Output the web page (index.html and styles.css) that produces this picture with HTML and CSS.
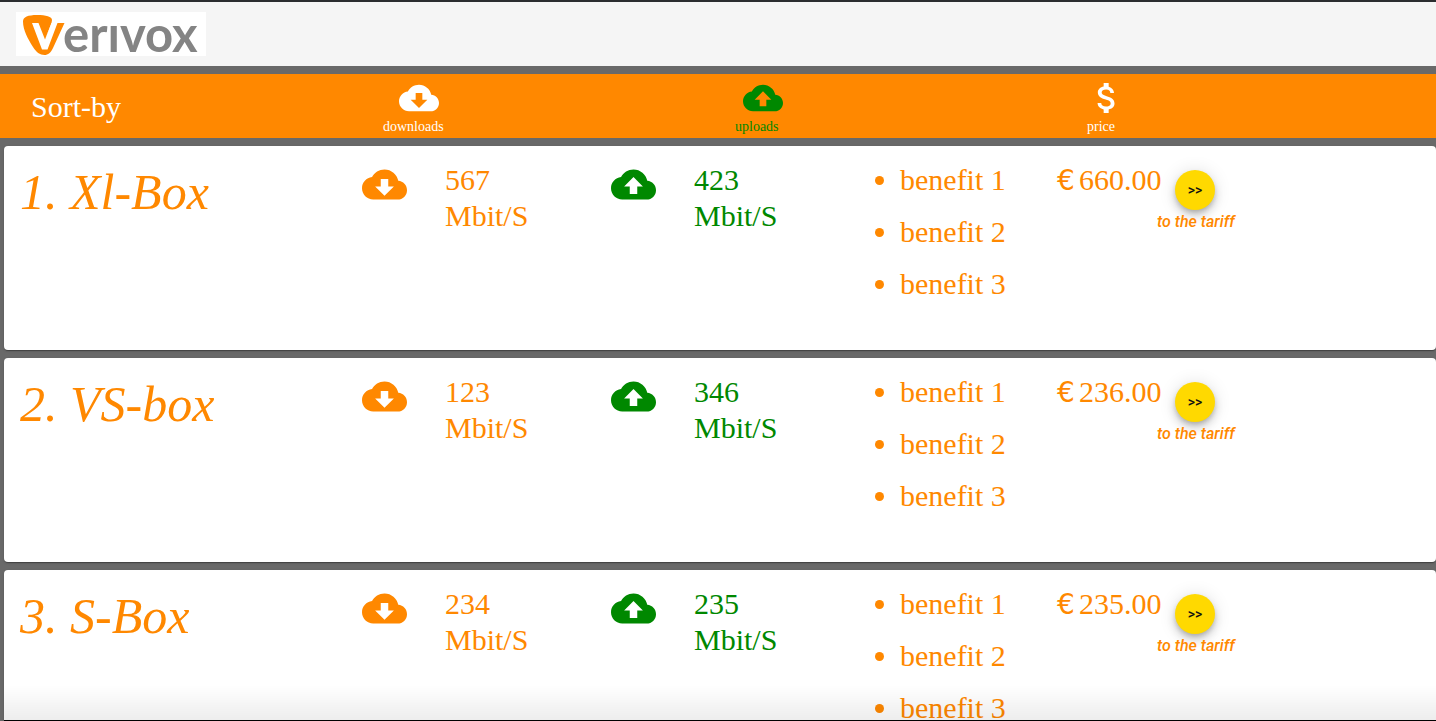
FILE: index.html
```html
<!DOCTYPE html>
<html lang="en">
<head>
<meta charset="utf-8">
<meta name="viewport" content="width=device-width, initial-scale=1">
<title>Verivox</title>
<link rel="stylesheet" href="styles.css">
</head>
<body>
<svg class="sprite" aria-hidden="true">
  <symbol id="cloud-down" viewBox="0 0 24 24"><path d="M19.35 10.04C18.67 6.59 15.64 4 12 4 9.11 4 6.6 5.64 5.35 8.04 2.34 8.36 0 10.91 0 14c0 3.31 2.69 6 6 6h13c2.76 0 5-2.24 5-5 0-2.64-2.05-4.78-4.65-4.96zM17 13l-5 5-5-5h3V9h4v4h3z"/></symbol>
  <symbol id="cloud-up" viewBox="0 0 24 24"><path d="M19.35 10.04C18.67 6.59 15.64 4 12 4 9.11 4 6.6 5.64 5.35 8.04 2.34 8.36 0 10.91 0 14c0 3.31 2.69 6 6 6h13c2.76 0 5-2.24 5-5 0-2.64-2.05-4.78-4.65-4.96zM14 13v4h-4v-4H7l5-5 5 5h-3z"/></symbol>
  <symbol id="money" viewBox="0 0 24 24"><path d="M11.8 10.9c-2.27-.59-3-1.2-3-2.15 0-1.09 1.01-1.85 2.7-1.85 1.78 0 2.44.85 2.5 2.1h2.21c-.07-1.72-1.12-3.3-3.21-3.81V3h-3v2.16c-1.94.42-3.5 1.68-3.5 3.61 0 2.31 1.91 3.46 4.7 4.13 2.5.6 3 1.48 3 2.41 0 .69-.49 1.79-2.7 1.79-2.06 0-2.87-.92-2.98-2.1h-2.2c.12 2.19 1.76 3.42 3.68 3.83V21h3v-2.15c1.95-.37 3.5-1.5 3.5-3.55 0-2.84-2.43-3.81-4.7-4.4z"/></symbol>
</svg>

<header class="toolbar">
  <a class="logo" href="#" aria-label="Verivox">
    <svg class="logo-mark" viewBox="0 0 50 44" aria-hidden="true">
      <path fill="#ff8800" d="M7 9.500C7 5 12 3 21 3C30 3 36 4.500 36 8C36 11 34 14.500 32 20L29 27L35.500 13C36.200 11.500 37 11 38.500 11H48.500L37 36C35 40.500 32 43 28.500 43C24 43 20 40 17 35C12 27 7 18 7 9.500Z"/>
      <path fill="#fff" d="M16 11H22.500L29 27.500L35.500 11H41.500L31.500 37.500H26Z"/>
    </svg>
    <span class="logo-text">erıvox</span>
  </a>
</header>

<nav class="sort-bar" aria-label="Sort-by">
  <span class="sort-title">Sort-by</span>
  <button class="sort-option wide" type="button"><svg><use href="#cloud-down"/></svg>downloads</button>
  <button class="sort-option medium active" type="button"><svg><use href="#cloud-up"/></svg>uploads</button>
  <button class="sort-option" type="button"><svg><use href="#money"/></svg>price</button>
</nav>

<main class="tariffs">
  <article class="card">
    <h2 class="name">1. Xl-Box</h2>
    <div class="speed"><svg><use href="#cloud-down"/></svg><span>567 Mbit/S</span></div>
    <div class="speed upload"><svg><use href="#cloud-up"/></svg><span>423 Mbit/S</span></div>
    <ul class="benefits"><li>benefit 1</li><li>benefit 2</li><li>benefit 3</li></ul>
    <div class="price"><span class="currency">€</span>660.00</div>
    <div class="action"><button class="fab" id="go-1" type="button">&gt;&gt;</button><label for="go-1">to the tariff</label></div>
  </article>
  <article class="card">
    <h2 class="name">2. VS-box</h2>
    <div class="speed"><svg><use href="#cloud-down"/></svg><span>123 Mbit/S</span></div>
    <div class="speed upload"><svg><use href="#cloud-up"/></svg><span>346 Mbit/S</span></div>
    <ul class="benefits"><li>benefit 1</li><li>benefit 2</li><li>benefit 3</li></ul>
    <div class="price"><span class="currency">€</span>236.00</div>
    <div class="action"><button class="fab" id="go-2" type="button">&gt;&gt;</button><label for="go-2">to the tariff</label></div>
  </article>
  <article class="card">
    <h2 class="name">3. S-Box</h2>
    <div class="speed"><svg><use href="#cloud-down"/></svg><span>234 Mbit/S</span></div>
    <div class="speed upload"><svg><use href="#cloud-up"/></svg><span>235 Mbit/S</span></div>
    <ul class="benefits"><li>benefit 1</li><li>benefit 2</li><li>benefit 3</li></ul>
    <div class="price"><span class="currency">€</span>235.00</div>
    <div class="action"><button class="fab" id="go-3" type="button">&gt;&gt;</button><label for="go-3">to the tariff</label></div>
  </article>
</main>
<div class="bottom-shade"></div>
</body>
</html>
```
FILE: styles.css
```css
* { box-sizing: border-box; }

body {
  margin: 0;
  height: 100vh;
  display: flex;
  flex-direction: column;
  overflow: hidden;
  background: #696969;
  color: #ff8800;
  font: 30px/36px "Liberation Serif", "Times New Roman", serif;
}

svg { display: block; fill: currentColor; }
.sprite { position: absolute; width: 0; height: 0; }

.toolbar {
  flex: none;
  padding: 10px 16px;
  border-top: 2px solid #2b2d30;
  background: #f5f5f5;
}

.logo {
  display: flex;
  width: 190px;
  height: 44px;
  background: #fff;
  color: #848484;
  text-decoration: none;
}
.logo-mark { width: 50px; height: 44px; flex: none; }
.logo-text { font: bold 49px/42px Lato, sans-serif; margin-left: -3px; }

.sort-bar {
  flex: none;
  display: grid;
  grid-template-columns: 352fr 352fr 352fr 349fr;
  margin-top: 8px;
  padding: 4px 0 2px 31px;
  background: #ff8800;
  color: #fff;
}
.sort-title { align-self: center; }
.sort-option {
  justify-self: start;
  padding: 0;
  border: 0;
  background: none;
  color: inherit;
  font: 14px/18px "Liberation Serif", "Times New Roman", serif;
  text-align: left;
  cursor: pointer;
}
.sort-option svg { width: 40px; height: 40px; }
.sort-option.wide svg { margin-left: 16px; }
.sort-option.medium svg { margin-left: 8px; }
.sort-option.active { color: #008800; }

.tariffs {
  flex: 1;
  min-height: 0;
  overflow: hidden;
  padding: 8px 0 0 4px;
}

.card {
  display: grid;
  grid-template-columns: 342fr 249fr 249fr 197fr minmax(0, 100fr) 263fr;
  margin-bottom: 8px;
  padding: 16px;
  border-radius: 4px;
  background: #fff;
  box-shadow: 0 2px 1px -1px rgba(0, 0, 0, .2), 0 1px 1px rgba(0, 0, 0, .14), 0 1px 3px rgba(0, 0, 0, .12);
}
.name { margin: 0; font-size: 50px; line-height: 60px; font-weight: normal; font-style: italic; }
.speed { display: flex; gap: 38px; }
.speed svg { flex: none; width: 45px; height: 45px; }
.speed span { width: 90px; }
.speed.upload { color: #008800; }
.benefits { margin: 0 0 16px; padding-left: 40px; }
.benefits li { padding-bottom: 16px; }
.price { white-space: nowrap; }
.currency { display: inline-block; width: 22px; font-family: "DejaVu Sans", sans-serif; font-size: 28px; line-height: 30px; }

.action {
  display: flex;
  flex-direction: column;
  align-items: flex-start;
  padding-top: 8px;
  font: italic 500 16px/24px Roboto, sans-serif;
}
.fab {
  width: 40px;
  height: 40px;
  margin-left: 18px;
  padding: 0;
  border: 0;
  border-radius: 50%;
  background: #ffd900;
  color: #111;
  font: 500 14px/24px Roboto, sans-serif;
  box-shadow: 0 3px 5px -1px rgba(0, 0, 0, .2), 0 6px 10px rgba(0, 0, 0, .14), 0 1px 18px rgba(0, 0, 0, .12);
  cursor: pointer;
}

.bottom-shade {
  position: fixed;
  inset: auto 0 0 4px;
  height: 36px;
  border-bottom: 1px solid #000;
  background: linear-gradient(transparent, rgba(0, 0, 0, .07));
  pointer-events: none;
}
```
